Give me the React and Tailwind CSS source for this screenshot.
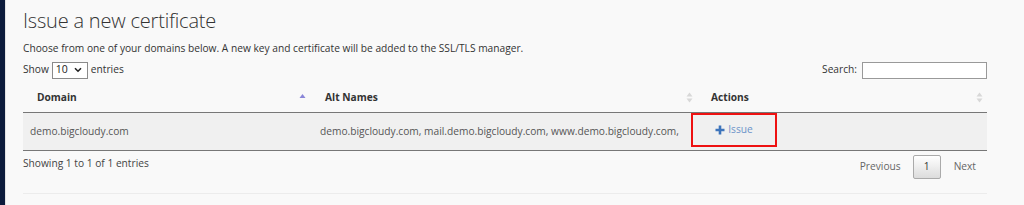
import React from "react";

function SortBoth() {
  return (
    <svg width="7" height="11" viewBox="0 0 7 11" className="shrink-0">
      <path d="M3.5 0.5 L6.5 4.5 L0.5 4.5 Z" fill="#d8d8d8" />
      <path d="M3.5 10.5 L6.5 6.5 L0.5 6.5 Z" fill="#d8d8d8" />
    </svg>
  );
}

function SortUp() {
  return (
    <svg width="7" height="11" viewBox="0 0 7 11" className="shrink-0">
      <path d="M3.5 2 L6.5 6 L0.5 6 Z" fill="#8a86d8" />
    </svg>
  );
}

export default function App() {
  return (
    <div
      className="flex h-[205px] w-[1024px] overflow-hidden bg-[#f9f9f9] text-[#333]"
      style={{ fontFamily: '"Open Sans", "Noto Sans", sans-serif' }}
    >
      <div className="w-[5px] shrink-0 bg-[#0c1b3c]" />
      <div className="w-px shrink-0 bg-[#e3e3e3]" />
      <div className="flex w-[981px] shrink-0 flex-col pl-[17px]">
        <h1 className="mt-[7px] text-[20px] leading-[28px] font-light tracking-[-0.2px] text-[#333]">
          Issue a new certificate
        </h1>
        <p className="mt-[6px] text-[10.2px] leading-[14px] text-[#333]">
          Choose from one of your domains below. A new key and certificate will be added to the SSL/TLS manager.
        </p>
        <div className="mt-[6px] flex h-[18px] items-center justify-between text-[10.2px]">
          <div className="flex items-center gap-[3px]">
            <span>Show</span>
            <div className="flex h-[17px] w-[36px] items-center justify-between border border-[#8a8a8a] bg-white pr-[5px] pl-[3px] text-[10.5px] text-[#222]">
              <span>10</span>
              <svg width="8" height="6" viewBox="0 0 8 6">
                <path d="M1 1.2 L4 4.2 L7 1.2" stroke="#222" strokeWidth="1.6" fill="none" />
              </svg>
            </div>
            <span>entries</span>
          </div>
          <div className="flex items-center gap-[5px]">
            <span>Search:</span>
            <div className="h-[17px] w-[125px] border border-[#999] bg-white" />
          </div>
        </div>
        <div className="mt-[4px] grid grid-cols-[290px_385px_289px] text-[10.2px]">
          <div className="flex h-[30px] items-center justify-between border-b border-[#777] pr-[7px] pl-[14px] font-bold text-[#333]">
            <span>Domain</span>
            <SortUp />
          </div>
          <div className="flex h-[30px] items-center justify-between border-b border-[#777] pr-[5px] pl-[12px] font-bold text-[#333]">
            <span>Alt Names</span>
            <SortBoth />
          </div>
          <div className="flex h-[30px] items-center justify-between border-b border-[#777] pr-[4px] pl-[13px] font-bold text-[#333]">
            <span>Actions</span>
            <SortBoth />
          </div>
          <div className="flex h-[38px] items-center border-b border-[#777] bg-[#f0f0f0] pl-[7px] text-[#555]">
            demo.bigcloudy.com
          </div>
          <div className="flex h-[38px] items-center border-b border-[#777] bg-[#f0f0f0] pl-[7px] whitespace-nowrap text-[#555]">
            demo.bigcloudy.com, mail.demo.bigcloudy.com, www.demo.bigcloudy.com,
          </div>
          <div className="flex h-[38px] items-start border-b border-[#777] bg-[#f0f0f0]">
            <div className="ml-[-7px] flex h-[34px] w-[86px] items-center justify-center gap-[3px] border-[2px] border-[#ee1111] text-[#6b93c9]">
              <svg width="10" height="10" viewBox="0 0 10 10">
                <path d="M5 0.5 V9.5 M0.5 5 H9.5" stroke="#3d74bb" strokeWidth="2.6" />
              </svg>
              <span>Issue</span>
            </div>
          </div>
        </div>
        <div className="flex h-[28px] items-center justify-between text-[10.2px]">
          <span className="mt-[-3px] text-[#444]">Showing 1 to 1 of 1 entries</span>
          <div className="mt-[3px] flex items-center pr-[11px] text-[#666]">
            <span className="mr-[12px]">Previous</span>
            <div className="flex h-[24px] w-[28px] items-center justify-center rounded-[2px] border border-[#aaa] bg-gradient-to-b from-white to-[#dcdcdc] text-[#333]">
              1
            </div>
            <span className="ml-[13px]">Next</span>
          </div>
        </div>
        <div className="mt-[14px] h-px w-[964px] bg-[#ececec]" />
      </div>
    </div>
  );
}
